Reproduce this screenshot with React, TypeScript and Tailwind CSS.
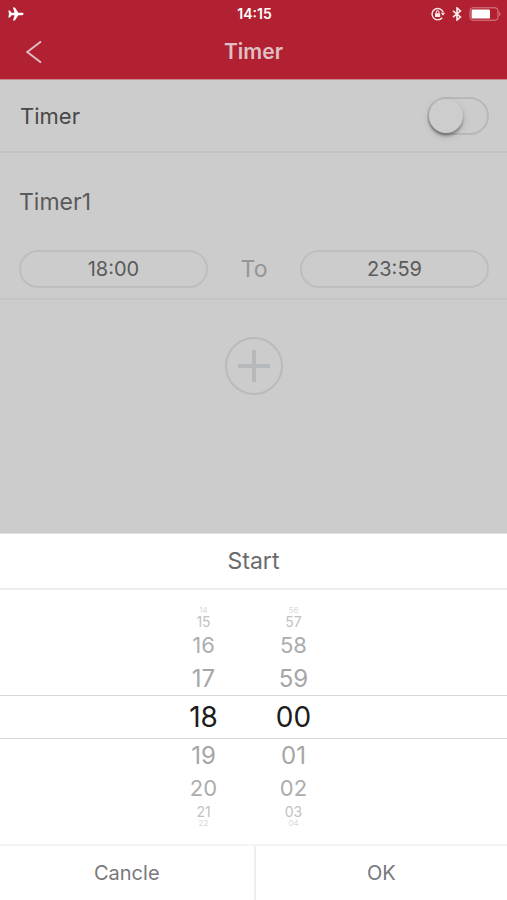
import React, { useState } from 'react';

type Target = 'start' | 'end';

// distance from the selected row, top to bottom
const wheelRows = [
  { offset: -4, className: 'h-[9px] text-[8px] leading-[9px] text-[#d9d9d9]' },
  { offset: -3, className: 'h-[14px] text-[14px] leading-[14px] text-[#c2c2c2]' },
  { offset: -2, className: 'h-[33px] text-[22px] leading-[33px] text-[#adadad]' },
  { offset: -1, className: 'h-[33px] text-[24px] leading-[33px] text-[#a6a6a6]' },
  { offset: 0, className: 'h-[44px] text-[28px] leading-[42px] text-[#1c1c1c] border-y border-[#d6d6d6]' },
  { offset: 1, className: 'h-[33px] text-[24px] leading-[33px] text-[#a6a6a6]' },
  { offset: 2, className: 'h-[33px] text-[22px] leading-[33px] text-[#adadad]' },
  { offset: 3, className: 'h-[14px] text-[14px] leading-[14px] text-[#c2c2c2]' },
  { offset: 4, className: 'h-[9px] text-[8px] leading-[9px] text-[#d9d9d9]' },
];

const pad = (n: number) => String(n).padStart(2, '0');
const wrap = (n: number, max: number) => (n + max) % max;

const StatusBar: React.FC = () => (
  <div className="grid grid-cols-3 items-center h-[27px] pl-2 pr-[6px] text-white">
    <svg viewBox="0 0 16 14" className="w-4 h-[14px]" fill="currentColor">
      <path d="M15.6 7c0 .7-.8 1.2-1.8 1.2h-3.4L6.9 13.6H4.9L6.6 8.3H3.6L1.9 10.4H.3L1 7 .3 3.6h1.6l1.7 2.1h3L4.9.4h2l3.5 5.4h3.4c1 0 1.8.5 1.8 1.2z" />
    </svg>
    <span className="text-center text-[14px] leading-[20px] font-semibold">14:15</span>
    <div className="flex items-center justify-end gap-[7px]">
      <svg viewBox="0 0 14 14" className="w-[14px] h-[14px]" fill="none" stroke="#fbe9ea">
        <path d="M12.2 5.4A5.7 5.7 0 1 0 11.2 10.8" strokeWidth="1.4" />
        <path d="M9.9 5.8H14l-2 2.9z" fill="#fbe9ea" stroke="none" />
        <rect x="4" y="6.2" width="5.2" height="3.8" rx=".4" fill="#fbe9ea" stroke="none" />
        <path d="M5.2 6.4V5.2a1.4 1.4 0 0 1 2.8 0v1.2" strokeWidth="1.1" />
      </svg>
      <svg viewBox="0 0 10 14" className="w-[10px] h-[14px]" fill="none" stroke="#fdf0f0" strokeWidth="1.6">
        <path d="M1 3.8l7.4 6.2L5 13V1l3.4 3L1 10.2" />
      </svg>
      <svg viewBox="0 0 32 14" className="w-8 h-[14px]">
        <rect x="1" y=".8" width="28" height="12.4" rx="2.8" fill="none" stroke="#d9868f" strokeWidth="1" />
        <rect x="2.6" y="2.4" width="18.4" height="9.2" rx="1.2" fill="#fff" />
        <path d="M30.3 4.8c1.4.5 1.4 3.9 0 4.4z" fill="#d9868f" />
      </svg>
    </div>
  </div>
);

const App: React.FC = () => {
  const [enabled, setEnabled] = useState(false);
  const [target, setTarget] = useState<Target>('start');
  const [times, setTimes] = useState({ start: { h: 18, m: 0 }, end: { h: 23, m: 59 } });

  const current = times[target];
  const format = (t: Target) => `${pad(times[t].h)}:${pad(times[t].m)}`;

  const update = (h: number, m: number) => {
    setTimes(prev => ({ ...prev, [target]: { h, m } }));
  };

  const pillClass = 'flex-1 h-[38px] rounded-full border-2 border-[#bbbfbf] text-[20px] leading-[28px] text-[#5a5a5a]';

  return (
    <div className="min-h-screen flex flex-col bg-[#cccccc] font-['Inter','Liberation_Sans',sans-serif]">
      <header className="bg-[#b12131] border-b border-[#c98a8c]">
        <StatusBar />
        <div className="grid grid-cols-3 items-center h-[52px] px-5 pb-[2px]">
          <button type="button" aria-label="Back" className="w-7 h-7 flex items-center justify-center">
            <svg viewBox="0 0 16 24" className="w-4 h-6" fill="none" stroke="#dfc0c2" strokeWidth="2">
              <path d="M15 1.5L1.2 12 15 22.5" />
            </svg>
          </button>
          <h1 className="text-center text-[21px] leading-[28px] font-semibold text-[#dfc0c2]">Timer</h1>
        </div>
      </header>

      <main className="flex-1">
        <div className="flex items-center justify-between h-[73px] pl-5 pr-[18px] border-b-2 border-[#c1c2c2]">
          <label htmlFor="timer-enabled" className="text-[22px] leading-[32px] text-[#484848]">Timer</label>
          <input
            id="timer-enabled"
            type="checkbox"
            role="switch"
            checked={enabled}
            onChange={e => setEnabled(e.target.checked)}
            className="appearance-none w-[62px] h-[38px] rounded-full border-2 border-[#b7b9b9] checked:bg-[#8fb89a] before:block before:w-[34px] before:h-[34px] before:rounded-full before:bg-[#cdcdcd] before:shadow-[0_3px_3px_rgba(0,0,0,0.3),0_3px_8px_rgba(0,0,0,0.12)] checked:before:ml-6"
          />
        </div>

        <section className="pl-[19px] pr-[18px] pt-[33px] pb-[10px] border-b-2 border-[#c4c6c6]">
          <h2 className="text-[23px] leading-[32px] text-[#5a5a5a]">Timer1</h2>
          <div className="flex items-center mt-8">
            <button type="button" onClick={() => setTarget('start')} className={pillClass}>{format('start')}</button>
            <span className="w-[92px] text-center text-[23px] leading-[32px] text-[#969696]">To</span>
            <button type="button" onClick={() => setTarget('end')} className={pillClass}>{format('end')}</button>
          </div>
        </section>

        <div className="flex justify-center py-[37px]">
          <button type="button" aria-label="Add timer" className="w-[58px] h-[58px] rounded-full border-2 border-[#b8bbbd] flex items-center justify-center">
            <svg viewBox="0 0 32 32" className="w-8 h-8" stroke="#b5b9bb" strokeWidth="4">
              <path d="M16 0v32M0 16h32" />
            </svg>
          </button>
        </div>
      </main>

      <section className="bg-white border-t border-[#e2e2e2]" aria-label="Time picker">
        <h2 className="py-3 text-center text-[23px] leading-[30px] text-[#6a6b6d] border-b-2 border-[#eceeee]">
          {target === 'start' ? 'Start' : 'End'}
        </h2>
        <div className="py-4">
          {wheelRows.map(({ offset, className }) => {
            const h = wrap(current.h + offset, 24);
            const m = wrap(current.m + offset, 60);
            return (
              <div key={offset} className={`flex justify-center items-center pr-[10px] ${className}`}>
                <button type="button" onClick={() => update(h, current.m)} className="w-[90px] text-center">{pad(h)}</button>
                <button type="button" onClick={() => update(current.h, m)} className="w-[90px] text-center">{pad(m)}</button>
              </div>
            );
          })}
        </div>
        <div className="grid grid-cols-2 h-[56px] border-t-2 border-[#f3f5f5] text-[20px] leading-[28px] text-[#77797b]">
          <button type="button">Cancle</button>
          <button type="button" className="border-l-2 border-[#eceff0]">OK</button>
        </div>
      </section>
    </div>
  );
};

export default App;
